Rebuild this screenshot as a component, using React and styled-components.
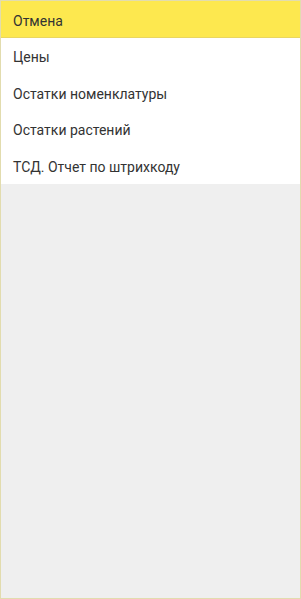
import React from "react";
import styled, { createGlobalStyle } from "styled-components";

const Global = createGlobalStyle`
  html, body { margin: 0; padding: 0; height: 100%; }
  body { font-family: Roboto, "Noto Sans", sans-serif; }
  #root { height: 100%; }
`;

const Frame = styled.div`
  box-sizing: border-box;
  height: 100vh;
  border: 1px solid #e2dcae;
  background: #efefef;
  display: flex;
  flex-direction: column;
`;

const Header = styled.div`
  box-sizing: border-box;
  height: 37px;
  background: #fde84f;
  border-bottom: 1px solid #e9d661;
  display: flex;
  align-items: center;
  padding: 3px 0 0 12px;
  font-size: 14px;
  color: #333;
`;

const List = styled.div`
  background: #fff;
`;

const Item = styled.div`
  box-sizing: border-box;
  height: 36.6px;
  display: flex;
  align-items: center;
  padding: 2px 0 0 12px;
  font-size: 14px;
  color: #333;
`;

const items = [
  "Цены",
  "Остатки номенклатуры",
  "Остатки растений",
  "ТСД. Отчет по штрихкоду",
];

export default function App() {
  return (
    <>
      <Global />
      <Frame>
        <Header>Отмена</Header>
        <List>
          {items.map((t) => (
            <Item key={t}>{t}</Item>
          ))}
        </List>
      </Frame>
    </>
  );
}
